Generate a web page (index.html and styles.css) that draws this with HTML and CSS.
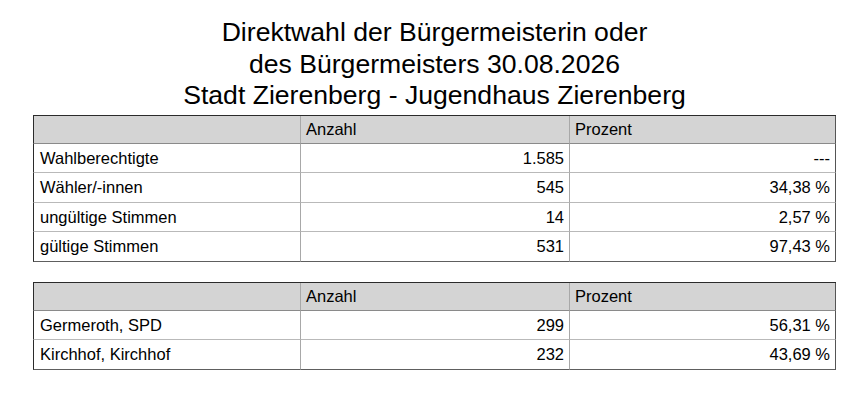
FILE: index.html
```html
<!DOCTYPE html>
<html lang="de">
<head>
<meta charset="utf-8">
<title>Direktwahl Zierenberg</title>
<link rel="stylesheet" href="styles.css">
</head>
<body>
<div class="page">
  <h1 class="title">Direktwahl der Bürgermeisterin oder<br>des Bürgermeisters 30.08.2026<br>Stadt Zierenberg - Jugendhaus Zierenberg</h1>

  <table class="result">
    <thead>
      <tr><th class="c1"></th><th class="c2">Anzahl</th><th class="c3">Prozent</th></tr>
    </thead>
    <tbody>
      <tr><td class="c1">Wahlberechtigte</td><td class="c2 num">1.585</td><td class="c3 num">---</td></tr>
      <tr><td class="c1">Wähler/-innen</td><td class="c2 num">545</td><td class="c3 num">34,38 %</td></tr>
      <tr><td class="c1">ungültige Stimmen</td><td class="c2 num">14</td><td class="c3 num">2,57 %</td></tr>
      <tr><td class="c1">gültige Stimmen</td><td class="c2 num">531</td><td class="c3 num">97,43 %</td></tr>
    </tbody>
  </table>

  <table class="result second">
    <thead>
      <tr><th class="c1"></th><th class="c2">Anzahl</th><th class="c3">Prozent</th></tr>
    </thead>
    <tbody>
      <tr><td class="c1">Germeroth, SPD</td><td class="c2 num">299</td><td class="c3 num">56,31 %</td></tr>
      <tr><td class="c1">Kirchhof, Kirchhof</td><td class="c2 num">232</td><td class="c3 num">43,69 %</td></tr>
    </tbody>
  </table>
</div>
</body>
</html>
```
FILE: styles.css
```css
html, body {
  margin: 0;
  padding: 0;
  background: #ffffff;
}

body {
  font-family: "Liberation Sans", Arial, sans-serif;
  color: #000000;
}

.page {
  width: 803px;
  padding: 17px 0 0 33px;
}

.title {
  margin: 0 0 3px 0;
  font-size: 26.6px;
  font-weight: normal;
  line-height: 31.5px;
  text-align: center;
}

.result {
  width: 803px;
  border-collapse: separate;
  border-spacing: 0;
  table-layout: fixed;
  font-size: 16.5px;
  border-top: 1px solid #2b2b2b;
}

.result.second {
  margin-top: 20px;
}

.result th,
.result td {
  padding: 0 5px;
  vertical-align: middle;
  text-align: left;
  font-weight: normal;
  line-height: 18px;
  white-space: nowrap;
}

.result th {
  height: 27px;
  background: #d4d4d4;
  border-bottom: 1px solid #8a8a8a;
}

.result td {
  height: 28.5px;
  border-bottom: 1px solid #b9b9b9;
}

.result tbody tr:last-child td {
  border-bottom-color: #5e5e5e;
}

.result .c1 {
  width: 255px;
  padding-left: 6px;
  border-left: 1px solid #2b2b2b;
}

.result .c2 {
  width: 258px;
  border-left: 1px solid #a8a8a8;
}

.result .c3 {
  border-left: 1px solid #a8a8a8;
  border-right: 1px solid #555555;
}

.result .num {
  text-align: right;
}
```
